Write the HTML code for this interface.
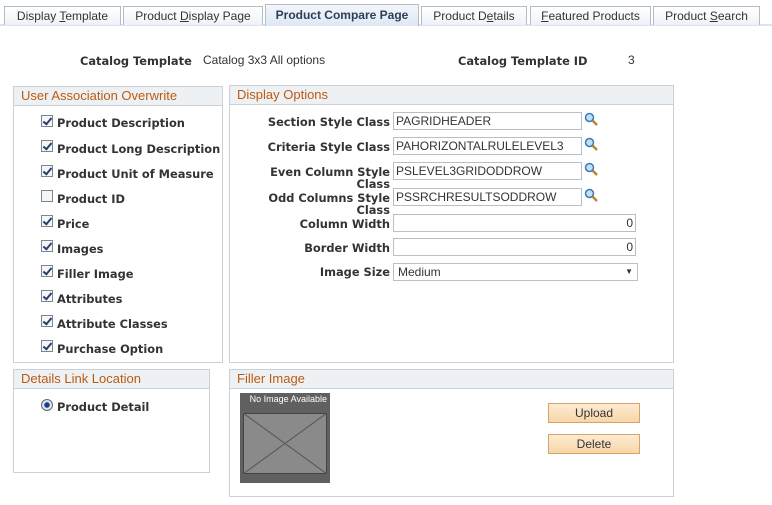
<!DOCTYPE html>
<html><head><style>
*{margin:0;padding:0;box-sizing:border-box}
body{width:772px;height:505px;background:#fff;font-family:"Liberation Sans",Arial,sans-serif;font-size:12px;color:#333;position:relative;overflow:hidden}
.a{position:absolute}
.tab{position:absolute;top:6px;height:19px;border:1px solid #b4bcc6;border-bottom:none;background:linear-gradient(#fff,#eef2f7);color:#333;font-size:12px;text-align:center;line-height:18px}
.tab.on{top:4px;height:22px;background:linear-gradient(#f4f7fb,#dde7f3);font-weight:bold;color:#2c3e5a;line-height:20px}
.box{position:absolute;border:1px solid #cbd1d8}
.hd{height:19px;background:#eef1f4;border-bottom:1px solid #cbd1d8;color:#bd5a10;font-size:13px;line-height:18px;padding-left:7px}
.b,.lbl{font-family:"DejaVu Sans",Verdana,sans-serif;font-weight:bold;font-size:11.4px;color:#333;margin-top:1px}
.cb{position:absolute;width:12px;height:12px;border:1px solid #7a8793;background:#f4f6f8}
.cb.c::after{content:"";position:absolute;left:3px;top:0px;width:3px;height:7px;border:solid #2a3f6c;border-width:0 2px 2px 0;transform:rotate(40deg)}
.lbl{position:absolute;text-align:right;width:160px;line-height:12px}
.inp{position:absolute;height:18px;border:1px solid #b8bfc7;background:#fff;font-size:12px;line-height:16px;padding-left:2px;color:#333}
.mg{position:absolute;width:14px;height:14px}
.btn{position:absolute;left:548px;width:92px;height:20px;border:1px solid #d6a46a;background:linear-gradient(#fdebd2,#f7d6a8);text-align:center;line-height:18px;font-size:12px;color:#333}
</style></head><body>
<div class="a" style="left:0;top:24px;width:772px;height:2px;background:#dbe5f1"></div>
<div class="tab" style="left:4px;width:117px">Display <u>T</u>emplate</div>
<div class="tab" style="left:123px;width:140px">Product <u>D</u>isplay Page</div>
<div class="tab on" style="left:265px;width:154px">Product Compare Page</div>
<div class="tab" style="left:421px;width:106px">Product D<u>e</u>tails</div>
<div class="tab" style="left:530px;width:121px"><u>F</u>eatured Products</div>
<div class="tab" style="left:653px;width:107px">Product <u>S</u>earch</div>

<div class="a b" style="left:80px;top:53px">Catalog Template</div>
<div class="a" style="left:203px;top:53px">Catalog 3x3 All options</div>
<div class="a b" style="left:458px;top:53px">Catalog Template ID</div>
<div class="a" style="left:628px;top:53px">3</div>

<div class="box" style="left:13px;top:86px;width:210px;height:277px"><div class="hd">User Association Overwrite</div></div>
<div class="box" style="left:229px;top:85px;width:445px;height:278px"><div class="hd">Display Options</div></div>
<div class="box" style="left:13px;top:369px;width:197px;height:104px"><div class="hd">Details Link Location</div></div>
<div class="box" style="left:229px;top:369px;width:445px;height:128px"><div class="hd">Filler Image</div></div>

<div class="cb c" style="left:41px;top:115px"></div><div class="a b" style="left:57px;top:115px">Product Description</div>
<div class="cb c" style="left:41px;top:140px"></div><div class="a b" style="left:57px;top:141px">Product Long Description</div>
<div class="cb c" style="left:41px;top:165px"></div><div class="a b" style="left:57px;top:166px">Product Unit of Measure</div>
<div class="cb" style="left:41px;top:190px"></div><div class="a b" style="left:57px;top:191px">Product ID</div>
<div class="cb c" style="left:41px;top:215px"></div><div class="a b" style="left:57px;top:216px">Price</div>
<div class="cb c" style="left:41px;top:240px"></div><div class="a b" style="left:57px;top:241px">Images</div>
<div class="cb c" style="left:41px;top:265px"></div><div class="a b" style="left:57px;top:266px">Filler Image</div>
<div class="cb c" style="left:41px;top:290px"></div><div class="a b" style="left:57px;top:291px">Attributes</div>
<div class="cb c" style="left:41px;top:315px"></div><div class="a b" style="left:57px;top:316px">Attribute Classes</div>
<div class="cb c" style="left:41px;top:340px"></div><div class="a b" style="left:57px;top:341px">Purchase Option</div>

<div class="lbl" style="left:230px;top:115px">Section Style Class</div>
<div class="inp" style="left:393px;top:112px;width:189px">PAGRIDHEADER</div>
<div class="lbl" style="left:230px;top:140px">Criteria Style Class</div>
<div class="inp" style="left:393px;top:137px;width:189px">PAHORIZONTALRULELEVEL3</div>
<div class="lbl" style="left:230px;top:165px">Even Column Style<br>Class</div>
<div class="inp" style="left:393px;top:162px;width:189px">PSLEVEL3GRIDODDROW</div>
<div class="lbl" style="left:230px;top:191px">Odd Columns Style<br>Class</div>
<div class="inp" style="left:393px;top:188px;width:189px">PSSRCHRESULTSODDROW</div>
<div class="lbl" style="left:230px;top:217px">Column Width</div>
<div class="inp" style="left:393px;top:214px;width:243px;text-align:right;padding-right:2px">0</div>
<div class="lbl" style="left:230px;top:241px">Border Width</div>
<div class="inp" style="left:393px;top:238px;width:243px;text-align:right;padding-right:2px">0</div>
<div class="lbl" style="left:230px;top:265px">Image Size</div>
<div class="inp" style="left:393px;top:263px;width:245px;padding-left:4px">Medium<span style="position:absolute;right:4px;top:0;font-size:8px">&#9660;</span></div>

<svg class="mg" style="left:584px;top:112px" viewBox="0 0 14 14"><circle cx="5.5" cy="5.5" r="4" fill="#bfe0f5" stroke="#3b79b8" stroke-width="1.5"/><path d="M8.5 8.5L13 13" stroke="#b8862e" stroke-width="2.5"/></svg>
<svg class="mg" style="left:584px;top:137px" viewBox="0 0 14 14"><circle cx="5.5" cy="5.5" r="4" fill="#bfe0f5" stroke="#3b79b8" stroke-width="1.5"/><path d="M8.5 8.5L13 13" stroke="#b8862e" stroke-width="2.5"/></svg>
<svg class="mg" style="left:584px;top:162px" viewBox="0 0 14 14"><circle cx="5.5" cy="5.5" r="4" fill="#bfe0f5" stroke="#3b79b8" stroke-width="1.5"/><path d="M8.5 8.5L13 13" stroke="#b8862e" stroke-width="2.5"/></svg>
<svg class="mg" style="left:584px;top:188px" viewBox="0 0 14 14"><circle cx="5.5" cy="5.5" r="4" fill="#bfe0f5" stroke="#3b79b8" stroke-width="1.5"/><path d="M8.5 8.5L13 13" stroke="#b8862e" stroke-width="2.5"/></svg>

<div class="a" style="left:41px;top:399px;width:12px;height:12px;border-radius:50%;border:1px solid #667;background:radial-gradient(circle,#1c3f8a 0,#1c3f8a 2.5px,#dfe6ee 3px)"></div>
<div class="a b" style="left:57px;top:399px">Product Detail</div>

<div class="a" style="left:240px;top:393px;width:90px;height:90px;background:#606060"></div>
<div class="a" style="left:240px;top:393px;width:90px;height:13px;color:#fff;font-size:9px;text-align:right;padding-right:3px;line-height:13px">No Image Available</div>
<svg class="a" style="left:243px;top:413px" width="84" height="61" viewBox="0 0 84 61"><rect x="0.5" y="0.5" width="83" height="60" fill="#8a8a8a" stroke="#444"/><path d="M0 0L84 61M84 0L0 61" stroke="#555" stroke-width="1"/></svg>

<div class="btn" style="top:403px">Upload</div>
<div class="btn" style="top:434px">Delete</div>
</body></html>
